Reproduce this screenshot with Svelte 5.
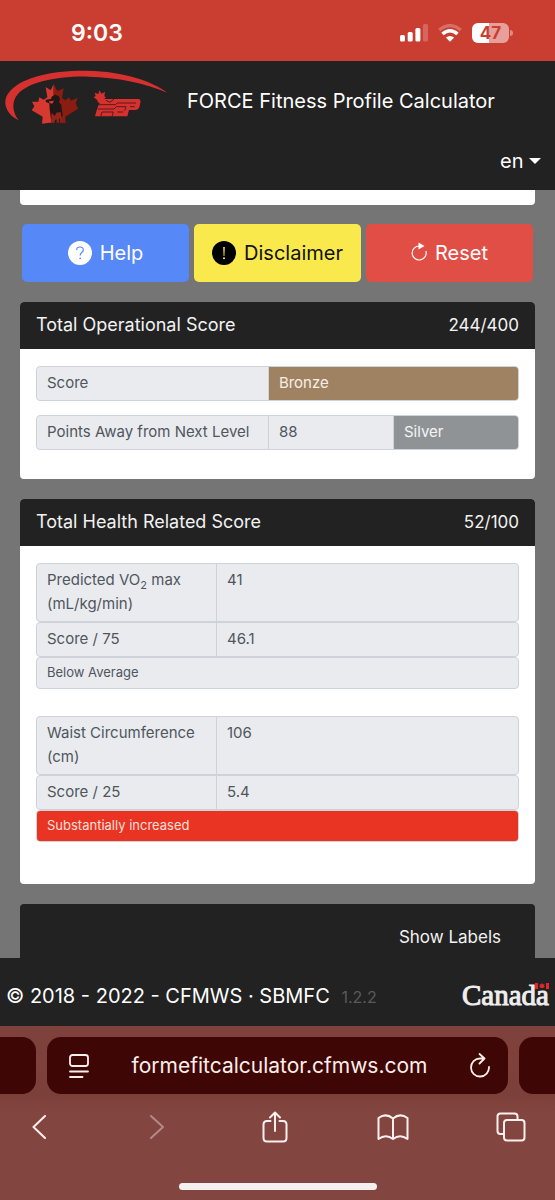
<script>
  let language = $state('en');

  const operational = [
    { label: 'Score', cells: [{ text: 'Bronze', tone: 'bronze' }] },
    {
      label: 'Points Away from Next Level',
      cells: [{ text: '88', tone: '' }, { text: 'Silver', tone: 'silver' }]
    }
  ];
</script>

<div class="screen">
  <div class="status">
    <span class="clock">9:03</span>
    <div class="indicators">
      <svg width="28" height="20" viewBox="0 0 28 20" fill="#fff" aria-hidden="true">
        <rect x="0" y="11" width="5" height="6.500" rx="1.500" />
        <rect x="7.700" y="8" width="5" height="9.500" rx="1.500" />
        <rect x="15.400" y="4" width="5" height="13.500" rx="1.500" />
        <rect x="23" y="0" width="5" height="17.500" rx="1.500" opacity=".22" />
      </svg>
      <svg width="24" height="20" viewBox="0 0 24 20" fill="none" aria-hidden="true">
        <path d="M1.200 6 Q12 -3 22.800 6" stroke="#fff" stroke-width="3.200" opacity=".25" />
        <path d="M4.500 10 Q12 3.500 19.500 10" stroke="#fff" stroke-width="3.600" />
        <path d="M7.800 13.600 Q12 10.300 16.200 13.600 L12 17.700Z" fill="#fff" />
      </svg>
      <div class="battery"><span class="level">47</span><i></i></div>
    </div>
  </div>

  <header class="nav">
    <div class="brand">
      <svg class="logo" width="170" height="62" viewBox="0 0 510 186" aria-hidden="true">
        <path fill="#d7312f" d="M56 163 C20 146 5 110 25 82 C58 34 155 13 260 14 C375 16 460 48 502 80 C440 53 350 33 265 32 C165 30 82 50 52 86 C34 108 37 138 56 163Z" />
        <path fill="#d7382f" d="M161 54 L152 73 L137 63 L142 94 L131 101 L118 94 L115 107 L96 107 L103 121 L95 133 L128 152 L126 173 L161 169Z" />
        <path fill="#8b1c12" d="M161 54 L172 75 L191 67 L186 96 L196 103 L207 94 L213 104 L233 95 L227 112 L234 128 L196 152 L197 172 L161 169Z" />
        <path fill="#211717" d="M137 108 L138 101 L153 99 L155 92 L165 86 L176 90 L180 99 L177 109 L184 117 L188 150 L181 153 L179 170 L172 160 L166 172 L161 158 L154 168 L149 130 L148 112Z" />
        <path fill="#94251b" d="M155 140 L164 150 L169 140 L182 138 L186 170 L178 155 L176 171 L168 159 L160 172 L153 168Z" />
        <path fill="#d7382f" d="M147 106 L162 104 L157 113 L149 111Z" />
        <path fill="#d7312f" d="M299 73 L304 83 L315 78 L313 91 L318 94 L309 102 L306 111 L295 110 L291 101 L281 94 L287 90 L284 80 L295 84Z" />
        <path fill="#d7312f" d="M309 99 H414 Q424 100 421 111 L418 123 Q415 132 405 132 H387 L382 151 H285 L291 130 L296 116Z" />
        <path fill="none" stroke="#3a1918" stroke-width="2.500" d="M318 103 L330 109 L342 99 M296 116 H346 L352 111 H408 M293 129 H342 L349 122 H378 L374 134 M390 122 H404 M306 138 L302 151 M306 138 H340 L336 151 M352 138 H370" />
      </svg>
      <h1>FORCE Fitness Profile Calculator</h1>
    </div>
    <label class="language">
      <select bind:value={language} aria-label="en"><option value="en">en</option></select>
      <i class="caret"></i>
    </label>
  </header>

  <main>
    <div class="remnant"></div>

    <div class="actions">
      <button class="help">
        <svg width="24" height="24" viewBox="0 0 24 24" aria-hidden="true">
          <circle cx="12" cy="12" r="12" fill="#fff" />
          <path d="M8.700 9 Q8.700 6 12 6 T15.300 9 Q15.300 10.500 13.700 11.600 Q12.200 12.600 12.200 14.500" fill="none" stroke="#5688f7" stroke-width="1.200" />
          <circle cx="12.200" cy="17.300" r=".9" fill="#5688f7" />
        </svg>
        Help
      </button>
      <button class="disclaimer">
        <svg width="24" height="24" viewBox="0 0 24 24" aria-hidden="true">
          <circle cx="12" cy="12" r="12" fill="#000" />
          <path d="M11.200 6h1.600l-.4 9h-.8z" fill="#f9e94c" />
          <circle cx="12" cy="17.300" r="1" fill="#f9e94c" />
        </svg>
        Disclaimer
      </button>
      <button class="reset">
        <svg width="16" height="22" viewBox="0 0 16 22" aria-hidden="true">
          <path d="M8.500 4 A7 7 0 1 0 14.900 9" fill="none" stroke="#fff" stroke-width="1.200" />
          <path d="M7.500 .5 L13.500 4 L7.500 7.500Z" fill="#fff" />
        </svg>
        Reset
      </button>
    </div>

    <section class="card operational">
      <header><h2>Total Operational Score</h2><span>244/400</span></header>
      <div class="body">
        {#each operational as row}
          <div class="group wide">
            <span class="cell name">{row.label}</span>
            {#each row.cells as cell}
              <span class="cell {cell.tone}">{cell.text}</span>
            {/each}
          </div>
        {/each}
      </div>
    </section>

    <section class="card health">
      <header><h2>Total Health Related Score</h2><span>52/100</span></header>
      <div class="body">
        <div class="measure">
          <div class="group">
            <span class="cell name">Predicted VO<sub>2</sub> max (mL/kg/min)</span>
            <span class="cell">41</span>
          </div>
          <div class="group">
            <span class="cell name">Score / 75</span>
            <span class="cell">46.1</span>
          </div>
          <div class="group note"><span class="cell">Below Average</span></div>
        </div>
        <div class="measure">
          <div class="group">
            <span class="cell name">Waist Circumference (cm)</span>
            <span class="cell">106</span>
          </div>
          <div class="group">
            <span class="cell name">Score / 25</span>
            <span class="cell">5.4</span>
          </div>
          <div class="group note"><span class="cell danger">Substantially increased</span></div>
        </div>
      </div>
    </section>

    <section class="labels"><button>Show Labels</button></section>
  </main>

  <footer class="legal">
    <p>© 2018 - 2022 - CFMWS · SBMFC <small>1.2.2</small></p>
    <div class="wordmark">
      Canada
      <svg width="14" height="7" viewBox="0 0 14 7" aria-hidden="true">
        <path d="M0 0h3v6H0zM11 0h3v6h-3zM7 0l1 1.500 1.500-.5-.5 2 1 .5-2 1.500H6L4 3.500 5 3l-.5-2 1.500.5z" fill="#e0282e" />
      </svg>
    </div>
  </footer>

  <div class="browser">
    <div class="tabs">
      <div class="tab left"></div>
      <div class="tab address">
        <button aria-label="Page menu">
          <svg width="20" height="24" viewBox="0 0 20 24" fill="none" stroke="#fdeeea" stroke-width="1.800" stroke-linecap="round" aria-hidden="true">
            <rect x="1" y="1" width="18" height="11" rx="2.500" />
            <path d="M1 17.500h18M1 23h12.500" />
          </svg>
        </button>
        <a href="#top">formefitcalculator.cfmws.com</a>
        <button aria-label="Reload">
          <svg width="20" height="25" viewBox="0 0 20 25" fill="none" stroke="#fdeeea" stroke-width="1.800" stroke-linecap="round" stroke-linejoin="round" aria-hidden="true">
            <path d="M14 5.500 H10 A9 9 0 1 0 19 14 M9.500 1 L14.500 5.500 L9.500 10.500" />
          </svg>
        </button>
      </div>
      <div class="tab right"></div>
    </div>
    <nav class="toolbar">
      <button aria-label="Back">
        <svg width="14" height="24" viewBox="0 0 14 24"><path d="M13 1 L1.500 12 L13 23" /></svg>
      </button>
      <button aria-label="Forward" disabled>
        <svg width="14" height="24" viewBox="0 0 14 24"><path d="M1 1 L13 12 L1 23" /></svg>
      </button>
      <button aria-label="Share">
        <svg width="26" height="32" viewBox="0 0 26 32"><path d="M8.500 10 H5 Q1.500 10 1.500 13.500 V27 Q1.500 30.500 5 30.500 H21 Q24.500 30.500 24.500 27 V13.500 Q24.500 10 21 10 H17.500 M13 20 V1.500 M8 6.500 L13 1.500 L18 6.500" /></svg>
      </button>
      <button aria-label="Bookmarks">
        <svg width="32" height="27" viewBox="0 0 32 27"><path d="M16 4.500 Q9-1.500 1.500 4 V25 Q9 19.500 16 25 Q23 19.500 30.500 25 V4 Q23-1.500 16 4.500 V25" /></svg>
      </button>
      <button aria-label="Tabs">
        <svg width="30" height="30" viewBox="0 0 30 30"><path d="M8 22 H4.500 Q1.500 22 1.500 19 V4.500 Q1.500 1.500 4.500 1.500 H18.500 Q21.500 1.500 21.500 4.500 V8" /><rect x="8" y="8" width="20.500" height="20.500" rx="3" /></svg>
      </button>
    </nav>
    <div class="home"></div>
  </div>
</div>

<style>
  :global(body) { margin: 0; background: #757575; }
  .screen {
    display: flex;
    flex-direction: column;
    min-height: 100vh;
    font-family: Inter, "Liberation Sans", sans-serif;
    background: #757575;
    color: #fff;
  }
  .screen * { box-sizing: border-box; }
  button { font: inherit; color: inherit; background: none; border: 0; padding: 0; }
  h1, h2, p { margin: 0; font-weight: 400; }

  .status {
    display: flex;
    justify-content: space-between;
    align-items: center;
    height: 61px;
    padding: 5px 46px 0 71px;
    background: #ca3d31;
  }
  .clock { font-size: 23px; font-weight: 600; }
  .indicators { display: flex; align-items: center; gap: 10px; }
  .indicators svg { margin-top: 2px; }
  .battery {
    position: relative;
    width: 37px;
    height: 20px;
    border-radius: 6px;
    background: linear-gradient(90deg, #fff 47%, #e6a099 47%);
    color: #ca3d31;
    font-size: 17px;
    font-weight: 700;
    line-height: 20px;
    text-align: center;
  }
  .battery i {
    position: absolute;
    right: -4px;
    top: 7px;
    width: 3px;
    height: 6px;
    border-radius: 0 3px 3px 0;
    background: #df8a82;
  }

  .nav { background: #222; padding: 5px 14px 3px 0; }
  .brand { display: flex; align-items: center; gap: 17px; height: 69px; }
  .logo { flex: none; align-self: flex-start; }
  h1 { font-size: 20px; line-height: 28px; white-space: nowrap; }
  .language { display: flex; justify-content: flex-end; align-items: center; gap: 5px; height: 52px; }
  select {
    appearance: none;
    padding: 0;
    border: 0;
    background: none;
    color: #fff;
    font: inherit;
    font-size: 20px;
  }
  .caret { border: 6px solid transparent; border-top-color: #fff; border-bottom: 0; }

  main { flex: 1; padding: 0 20px; }
  .remnant { height: 15px; border-radius: 0 0 4px 4px; background: #fff; }
  .actions {
    display: grid;
    grid-template-columns: repeat(3, 1fr);
    gap: 5px;
    padding: 19px 2px 20px;
  }
  .actions button {
    display: flex;
    align-items: center;
    justify-content: center;
    gap: 8px;
    height: 58px;
    border-radius: 5px;
    font-size: 20px;
  }
  .help { background: #5688f7; }
  .actions .disclaimer { background: #f9e94c; color: #111; }
  .reset { background: #e04e45; }

  .card { margin-bottom: 20px; border-radius: 4px; background: #fff; overflow: hidden; }
  .card header {
    display: flex;
    justify-content: space-between;
    align-items: center;
    height: 47px;
    padding: 0 16px 2px;
    background: #222;
    font-size: 17px;
    color: #f2f2f2;
  }
  h2 { font-size: 18px; }
  .body { padding: 17px 16px 16px; }
  .operational .body { display: grid; gap: 14px; padding-bottom: 29px; }
  .health .body { display: grid; gap: 27px; padding-bottom: 42px; }
  .group {
    display: grid;
    grid-template-columns: 179px 1fr;
    border: 1px solid #ced3da;
    border-radius: 4px;
    background: #e9ebef;
    color: #50565c;
    font-size: 15px;
    line-height: 24px;
    overflow: hidden;
  }
  .group.wide { display: flex; }
  .wide .cell { flex: 1; }
  .wide .name { flex: 0 0 48%; }
  .cell { padding: 4px 10px 5px; }
  .cell + .cell { border-left: 1px solid #ced3da; }
  .group .bronze { background: #9f8262; color: #f7efe6; }
  .group .silver { background: #8f9395; color: #f5f5f5; }
  .group.note { grid-template-columns: 1fr; font-size: 13px; line-height: 21px; }
  .group .danger { background: #e93323; color: #fde0dc; }
  sub { font-size: 11px; line-height: 0; }

  .labels {
    display: flex;
    justify-content: flex-end;
    align-items: center;
    height: 54px;
    padding: 12px 34px 0 0;
    border-radius: 4px 4px 0 0;
    background: #222;
    color: #f2f2f2;
    font-size: 17px;
  }

  .legal {
    display: flex;
    justify-content: space-between;
    align-items: center;
    height: 68px;
    padding: 8px 6px 0;
    background: #222;
    font-size: 20px;
  }
  small { margin-left: 6px; font-size: 16px; color: #5a5a5a; }
  .wordmark {
    position: relative;
    margin-bottom: 2px;
    color: #eee;
    font-family: "Liberation Serif", serif;
    font-size: 29px;
    -webkit-text-stroke: 1px #eee;
  }
  .wordmark svg { position: absolute; right: 0; top: 4px; }

  .browser {
    height: 174px;
    padding-top: 11px;
    background: linear-gradient(#7f413c, #7c403b 40%, #834540 50%);
  }
  .tabs { display: grid; grid-template-columns: 36px 1fr 36px; gap: 11px; height: 57px; }
  .tab { border-radius: 14px; background: #3e0604; }
  .left { border-radius: 0 14px 14px 0; }
  .right { border-radius: 14px 0 0 14px; }
  .address {
    display: flex;
    justify-content: space-between;
    align-items: center;
    padding: 0 18px 0 22px;
  }
  .tab button, .toolbar button { display: grid; place-items: center; }
  a { color: #fdeeea; font-size: 21px; text-decoration: none; }
  .toolbar {
    display: flex;
    justify-content: space-between;
    padding: 11px 22px 0 17px;
  }
  .toolbar button { width: 44px; height: 44px; }
  .toolbar svg { fill: none; stroke: #fdf0ee; stroke-width: 2; stroke-linecap: round; stroke-linejoin: round; }
  .toolbar button:disabled { opacity: .4; }
  .home { width: 198px; height: 7px; margin: 34px auto 0; border-radius: 4px; background: #f3f0ef; }
</style>
